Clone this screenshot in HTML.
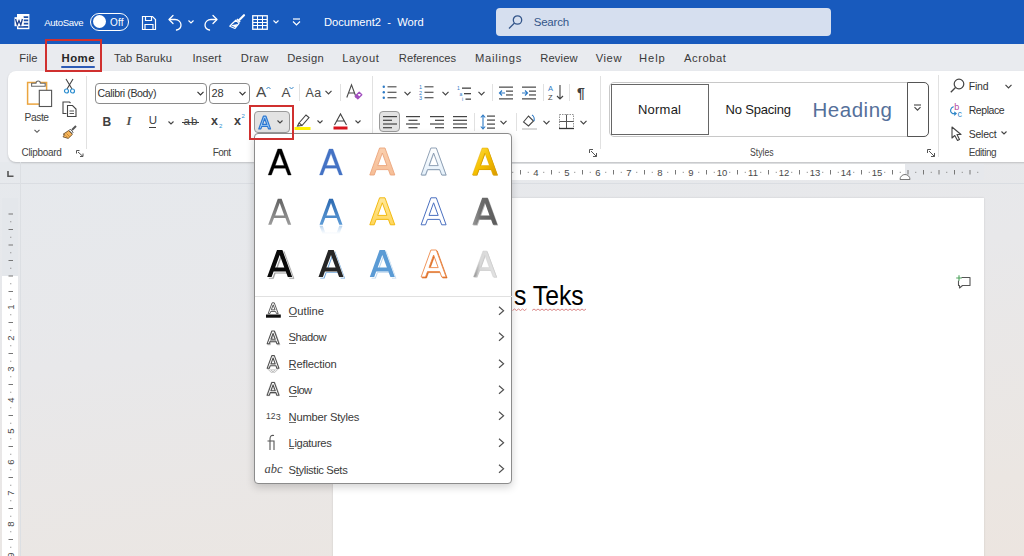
<!DOCTYPE html>
<html><head><meta charset="utf-8"><style>
html,body{margin:0;padding:0}
body{width:1024px;height:556px;overflow:hidden;position:relative;font-family:"Liberation Sans",sans-serif;background:#E8EAED}
.a{position:absolute}
.t{position:absolute;white-space:nowrap}
svg{overflow:visible}
</style></head><body>
<div class="a" style="left:0;top:162px;width:1024px;height:394px;background:linear-gradient(172deg,#E6E9ED 0%,#E8E8EA 40%,#EBE6E2 85%,#ECE5E0 100%)"></div>
<div class="a" style="left:0px;top:0px;width:1024px;height:44px;background:#185ABD"></div>
<div class="a" style="left:0px;top:44px;width:1024px;height:118px;background:#E9EBEF"></div>
<div class="a" style="left:8px;top:71px;width:1030px;height:91px;background:#FFFFFF;border-radius:8px;box-shadow:0 1px 2px rgba(0,0,0,0.18)"></div>
<svg class="a" style="left:14px;top:14px;" width="16" height="16" viewBox="0 0 16 16"><rect x="3.6" y="0.6" width="11.2" height="14" fill="#fff" stroke="#fff" stroke-width="1.2"/><path d="M9.6 3.2h4.6M9.6 6.4h4.6M9.6 9.6h4.6M4.4 12.8h9.8" stroke="#1C4FA8" stroke-width="1.7"/><rect x="0.5" y="3.2" width="9" height="9" fill="#fff"/><path d="M1.6 5 L3.2 10.8 L5 6.6 L6.8 10.8 L8.4 5" fill="none" stroke="#1D3F8C" stroke-width="1.3"/></svg>
<div class="t" style="left:44.2px;top:18.17px;font-size:9.6px;line-height:9.6px;letter-spacing:-0.319px;color:#FFFFFF;">AutoSave</div>
<div class="a" style="left:90px;top:13px;width:37px;height:16px;border:1.3px solid #fff;border-radius:10px"></div>
<div class="a" style="left:92.5px;top:15.3px;width:13px;height:13px;background:#fff;border-radius:50%"></div>
<div class="t" style="left:110.0px;top:17.83px;font-size:10px;line-height:10px;letter-spacing:0.173px;color:#FFFFFF;">Off</div>
<svg class="a" style="left:141px;top:15px;" width="16" height="16" viewBox="0 0 16 16"><path d="M1.5 1.5h10l3 3v10h-13z" fill="none" stroke="#fff" stroke-width="1.2"/><path d="M4.5 1.5v4h6v-4M4 14.5v-5h8v5" fill="none" stroke="#fff" stroke-width="1.2"/></svg>
<svg class="a" style="left:167px;top:14px;" width="16" height="17" viewBox="0 0 16 17"><path d="M2 5.5 L6 1.5 M2 5.5 L6 9.5" fill="none" stroke="#fff" stroke-width="1.3" stroke-linecap="round"/><path d="M2.5 5.5 H8 C11.5 5.5 14 8 14 11 C14 13.5 12 15.5 9.5 16" fill="none" stroke="#fff" stroke-width="1.3" stroke-linecap="round"/></svg>
<svg class="a" style="left:188px;top:20px;" width="6" height="4" viewBox="0 0 6 4"><path d="M0.5 0.5l2.5 2.5l2.5-2.5" fill="none" stroke="#fff" stroke-width="1.1"/></svg>
<svg class="a" style="left:203px;top:14px;" width="16" height="17" viewBox="0 0 16 17"><path d="M14 5.5 L10 1.5 M14 5.5 L10 9.5" fill="none" stroke="#fff" stroke-width="1.3" stroke-linecap="round"/><path d="M13.5 5.5 H8 C4.5 5.5 2 8 2 11 C2 13.5 4 15.5 6.5 16" fill="none" stroke="#fff" stroke-width="1.3" stroke-linecap="round"/></svg>
<svg class="a" style="left:229px;top:14px;" width="16" height="16" viewBox="0 0 16 16"><path d="M15 1.2 L10.5 5.7" stroke="#fff" stroke-width="2.2" stroke-linecap="round"/><path d="M8.6 4.6 L11.6 7.6 L10.4 8.8 L7.4 5.8 Z" fill="#fff"/><path d="M6.8 6.2 L10 9.4 L6 14.5 L0.8 12.2 L2.8 10 Z" fill="none" stroke="#fff" stroke-width="1.2" stroke-linejoin="round"/><path d="M2 11.2 L6.5 13.5 L9 10 Z" fill="#fff"/></svg>
<svg class="a" style="left:252px;top:15px;" width="16" height="15" viewBox="0 0 16 15"><rect x="0.75" y="0.75" width="14.5" height="13.5" fill="none" stroke="#fff" stroke-width="1.3"/><path d="M1 4.5h14M1 7.5h14M1 10.5h14M5.5 1v13M10.5 1v13" stroke="#fff" stroke-width="1"/></svg>
<svg class="a" style="left:273px;top:20px;" width="6" height="4" viewBox="0 0 6 4"><path d="M0.5 0.5l2.5 2.5l2.5-2.5" fill="none" stroke="#fff" stroke-width="1.1"/></svg>
<svg class="a" style="left:292px;top:18px;" width="9" height="8" viewBox="0 0 9 8"><path d="M1 1h7" stroke="#fff" stroke-width="1.2"/><path d="M1 3.5l3.5 3.5l3.5-3.5" fill="none" stroke="#fff" stroke-width="1.2"/></svg>
<div class="t" style="left:323.6px;top:17.16px;font-size:11.5px;line-height:11.5px;letter-spacing:0.000px;color:#FFFFFF;transform:scaleX(0.97);transform-origin:0 0;">Document2 &nbsp;-&nbsp; Word</div>
<div class="a" style="left:496px;top:8px;width:335px;height:28px;background:#D6DFEF;border-radius:4px"></div>
<svg class="a" style="left:508px;top:15px;" width="15" height="14" viewBox="0 0 15 14"><circle cx="9.5" cy="5" r="4.2" fill="none" stroke="#34568A" stroke-width="1.3"/><path d="M6.5 8 L1 13.5" stroke="#34568A" stroke-width="1.3"/></svg>
<div class="t" style="left:533.7px;top:17.16px;font-size:11.5px;line-height:11.5px;letter-spacing:-0.208px;color:#34568A;">Search</div>
<div class="t" style="left:19.3px;top:52.72px;font-size:11.2px;line-height:11.2px;letter-spacing:0.051px;color:#3A3A3A;">File</div>
<div class="t" style="left:113.9px;top:52.72px;font-size:11.2px;line-height:11.2px;letter-spacing:0.160px;color:#3A3A3A;">Tab Baruku</div>
<div class="t" style="left:192.6px;top:52.72px;font-size:11.2px;line-height:11.2px;letter-spacing:0.158px;color:#3A3A3A;">Insert</div>
<div class="t" style="left:240.7px;top:52.72px;font-size:11.2px;line-height:11.2px;letter-spacing:0.488px;color:#3A3A3A;">Draw</div>
<div class="t" style="left:287.2px;top:52.72px;font-size:11.2px;line-height:11.2px;letter-spacing:0.327px;color:#3A3A3A;">Design</div>
<div class="t" style="left:342.2px;top:52.72px;font-size:11.2px;line-height:11.2px;letter-spacing:0.614px;color:#3A3A3A;">Layout</div>
<div class="t" style="left:398.8px;top:52.72px;font-size:11.2px;line-height:11.2px;letter-spacing:0.019px;color:#3A3A3A;">References</div>
<div class="t" style="left:475.0px;top:52.72px;font-size:11.2px;line-height:11.2px;letter-spacing:0.774px;color:#3A3A3A;">Mailings</div>
<div class="t" style="left:540.2px;top:52.72px;font-size:11.2px;line-height:11.2px;letter-spacing:0.155px;color:#3A3A3A;">Review</div>
<div class="t" style="left:595.7px;top:52.72px;font-size:11.2px;line-height:11.2px;letter-spacing:0.575px;color:#3A3A3A;">View</div>
<div class="t" style="left:639.0px;top:52.72px;font-size:11.2px;line-height:11.2px;letter-spacing:0.922px;color:#3A3A3A;">Help</div>
<div class="t" style="left:684.0px;top:52.72px;font-size:11.2px;line-height:11.2px;letter-spacing:0.567px;color:#3A3A3A;">Acrobat</div>
<div class="t" style="left:61.4px;top:52.55px;font-size:11.4px;line-height:11.4px;letter-spacing:0.509px;color:#262626;font-weight:bold;">Home</div>
<div class="a" style="left:61px;top:66px;width:34px;height:2.2px;background:#2D5BB5;border-radius:1px"></div>
<svg class="a" style="left:26px;top:78px;" width="27" height="30" viewBox="0 0 27 30"><rect x="1.6" y="4.5" width="19" height="21.6" fill="#fff" stroke="#EBA53F" stroke-width="1.5"/><path d="M5.6 8.3 V5.2 H10 a2.2 2.2 0 0 1 4.4 0 H19.2 V8.3 Z" fill="#fff" stroke="#6A6A6A" stroke-width="1.1" stroke-linejoin="round"/><rect x="13.3" y="12.3" width="12.3" height="16.2" fill="#fff" stroke="#555" stroke-width="1.1"/></svg>
<div class="t" style="left:24.6px;top:112.76px;font-size:10.2px;line-height:10.2px;letter-spacing:-0.421px;color:#404040;">Paste</div>
<svg class="a" style="left:34px;top:129px;" width="6" height="5" viewBox="0 0 6 5"><path d="M0.5 0.8l2.5 2.5l2.5-2.5" fill="none" stroke="#555" stroke-width="1.1"/></svg>
<svg class="a" style="left:64px;top:78px;" width="11" height="16" viewBox="0 0 11 16"><path d="M2 1 L8 11 M9 1 L3 11" stroke="#444" stroke-width="1.1"/><circle cx="2.5" cy="13" r="2" fill="none" stroke="#2E8FD0" stroke-width="1.2"/><circle cx="8.5" cy="13" r="2" fill="none" stroke="#2E8FD0" stroke-width="1.2"/></svg>
<svg class="a" style="left:62px;top:101px;" width="15" height="16" viewBox="0 0 15 16"><path d="M4.5 12.5 h-3.5 v-11.5 h6.5 l1 1" fill="none" stroke="#444" stroke-width="1.1"/><path d="M5.5 4.5 h5 l3.5 3.5 v7.5 h-8.5 z" fill="#fff" stroke="#444" stroke-width="1.1"/><path d="M7.5 10h4.5M7.5 12.5h4.5" stroke="#444" stroke-width="0.9"/></svg>
<svg class="a" style="left:62px;top:125px;" width="15" height="14" viewBox="0 0 15 14"><path d="M14 1 L10 5" stroke="#555" stroke-width="2"/><path d="M8.2 4.2 L11.2 7.2 L10 8.4 L7 5.4 Z" fill="#fff" stroke="#555" stroke-width="0.9"/><path d="M6.6 5.6 L10.4 9.4 L6.2 13.4 L1 11.8 L2.6 9.6 L1.2 9.2 Z" fill="#F6B45A" stroke="#6B5030" stroke-width="0.9" stroke-linejoin="round"/><path d="M4.5 8.5 L7.8 11.8 M3.5 10.3 L5.6 12.4" stroke="#B87A20" stroke-width="0.7"/></svg>
<div class="t" style="left:21.6px;top:147.93px;font-size:10px;line-height:10px;letter-spacing:-0.338px;color:#444;">Clipboard</div>
<svg class="a" style="left:76px;top:150px;" width="8" height="7" viewBox="0 0 8 7"><path d="M0.5 0.5h3M0.5 0.5v3M2 2 L7 6.5M7 3.5v3h-3" fill="none" stroke="#555" stroke-width="1"/></svg>
<div class="a" style="left:86px;top:76px;width:1px;height:73px;background:#E1E1E1"></div>
<div class="a" style="left:95px;top:82.5px;width:112px;height:21px;border:1px solid #8A8A8A;border-radius:4px;box-sizing:border-box"></div>
<div class="t" style="left:97.5px;top:88.02px;font-size:10.6px;line-height:10.6px;letter-spacing:-0.401px;color:#333;">Calibri (Body)</div>
<svg class="a" style="left:197px;top:91px;" width="7" height="5" viewBox="0 0 7 5"><path d="M0.5 0.8l3 3l3-3" fill="none" stroke="#333" stroke-width="1.2"/></svg>
<div class="a" style="left:209px;top:82.5px;width:40.5px;height:21px;border:1px solid #8A8A8A;border-radius:4px;box-sizing:border-box"></div>
<div class="t" style="left:211.5px;top:88.19px;font-size:11px;line-height:11px;letter-spacing:-0.236px;color:#333;">28</div>
<svg class="a" style="left:239px;top:91px;" width="7" height="5" viewBox="0 0 7 5"><path d="M0.5 0.8l3 3l3-3" fill="none" stroke="#333" stroke-width="1.2"/></svg>
<div class="t" style="left:256.0px;top:84.38px;font-size:15.5px;line-height:15.5px;letter-spacing:0.000px;color:#4A4A4A;">A</div>
<svg class="a" style="left:265.5px;top:85.5px;" width="5" height="4" viewBox="0 0 5 4"><path d="M0.5 3l2-2l2 2" fill="none" stroke="#3A88C8" stroke-width="1"/></svg>
<div class="t" style="left:281.5px;top:86.07px;font-size:13.5px;line-height:13.5px;letter-spacing:0.000px;color:#4A4A4A;">A</div>
<svg class="a" style="left:288.5px;top:85.5px;" width="5" height="4" viewBox="0 0 5 4"><path d="M0.5 1l2 2l2-2" fill="none" stroke="#3A88C8" stroke-width="1"/></svg>
<div class="a" style="left:299px;top:84px;width:1px;height:17px;background:#E1E1E1"></div>
<div class="t" style="left:305.6px;top:86.92px;font-size:12.5px;line-height:12.5px;letter-spacing:0.210px;color:#4A4A4A;">Aa</div>
<svg class="a" style="left:325px;top:90px;" width="7" height="5" viewBox="0 0 7 5"><path d="M0.5 0.8l3 3l3-3" fill="none" stroke="#444" stroke-width="1.2"/></svg>
<div class="a" style="left:340px;top:84px;width:1px;height:17px;background:#E1E1E1"></div>
<svg class="a" style="left:346px;top:84px;" width="17" height="16" viewBox="0 0 17 16"><path d="M0.8 13.5 L5.5 0.8 L10.2 13.5 M2.5 9h6" fill="none" stroke="#4A4A4A" stroke-width="1.1"/><path d="M9.2 12.2 L13.2 8.2 L15.8 10.8 L11.8 14.8 Z" fill="#fff" stroke="#A24FBF" stroke-width="1.3" stroke-linejoin="round"/><path d="M9.2 12.2 L11.2 10.2 L13.8 12.8 L11.8 14.8 Z" fill="#A24FBF"/></svg>
<div class="a" style="left:372px;top:76px;width:1px;height:73px;background:#E1E1E1"></div>
<div class="t" style="left:102.4px;top:115.94px;font-size:12px;line-height:12px;letter-spacing:0.000px;color:#404040;font-weight:bold;">B</div>
<div class="t" style="left:126.5px;top:115.22px;font-size:12.5px;line-height:12.5px;letter-spacing:0.000px;color:#505050;font-family:'Liberation Serif',serif;font-weight:bold;"><i>I</i></div>
<div class="t" style="left:148.7px;top:115.26px;font-size:11.5px;line-height:11.5px;letter-spacing:0.000px;color:#404040;">U</div>
<div class="a" style="left:148.7px;top:127px;width:7.6px;height:1px;background:#404040"></div>
<svg class="a" style="left:168px;top:121px;" width="6" height="4" viewBox="0 0 6 4"><path d="M0.5 0.5l2.5 2.5l2.5-2.5" fill="none" stroke="#444" stroke-width="1.1"/></svg>
<div class="t" style="left:183.5px;top:115.86px;font-size:11.5px;line-height:11.5px;letter-spacing:1.208px;color:#404040;">ab</div>
<div class="a" style="left:182px;top:121.5px;width:17px;height:1px;background:#404040"></div>
<div class="t" style="left:211.0px;top:115.02px;font-size:12.5px;line-height:12.5px;letter-spacing:0.000px;color:#404040;font-weight:bold;">x</div>
<div class="t" style="left:219.0px;top:123.42px;font-size:6px;line-height:6px;letter-spacing:0.000px;color:#2E8FD0;">2</div>
<div class="t" style="left:234.0px;top:115.02px;font-size:12.5px;line-height:12.5px;letter-spacing:0.000px;color:#404040;font-weight:bold;">x</div>
<div class="t" style="left:241.5px;top:112.92px;font-size:6px;line-height:6px;letter-spacing:0.000px;color:#2E8FD0;">2</div>
<div class="a" style="left:253.7px;top:111.2px;width:36px;height:21.5px;background:#E3E3E3;border:1px solid #9A9A9A;border-radius:4px;box-sizing:border-box"></div>
<svg class="a" style="left:257px;top:114px;" width="16" height="16" viewBox="0 0 16 16"><path d="M0 27 L9.8 0 L15.2 0 L25 27 L20.6 27 L18.6 21.6 L6.4 21.6 L4.4 27 Z M7.9 17.6 L17.1 17.6 L12.5 5.0 Z" fill-rule="evenodd" transform="translate(1.8 2.2) scale(0.47)" fill="#A6D2F7" stroke="#2D78D2" stroke-width="2.6" stroke-linejoin="round"/></svg>
<svg class="a" style="left:277px;top:120px;" width="6" height="4" viewBox="0 0 6 4"><path d="M0.5 0.5l2.5 2.5l2.5-2.5" fill="none" stroke="#444" stroke-width="1.1"/></svg>
<svg class="a" style="left:294px;top:113px;" width="17" height="17" viewBox="0 0 17 17"><path d="M5 10 L12 2 L15 4.5 L8 12.5 Z" fill="#fff" stroke="#444" stroke-width="1.1"/><path d="M5 10 L3.5 13 L8 12.5" fill="none" stroke="#444" stroke-width="1.1"/><rect x="0.5" y="14" width="16" height="3" fill="#FFF200"/></svg>
<svg class="a" style="left:317px;top:120px;" width="6" height="4" viewBox="0 0 6 4"><path d="M0.5 0.5l2.5 2.5l2.5-2.5" fill="none" stroke="#444" stroke-width="1.1"/></svg>
<svg class="a" style="left:333px;top:113px;" width="15" height="17" viewBox="0 0 15 17"><path d="M1.5 12 L7.5 1 L13.5 12 M3.8 8h7.4" fill="none" stroke="#444" stroke-width="1.1"/><rect x="0.5" y="13.5" width="14" height="3" fill="#D9141E"/></svg>
<svg class="a" style="left:355px;top:120px;" width="6" height="4" viewBox="0 0 6 4"><path d="M0.5 0.5l2.5 2.5l2.5-2.5" fill="none" stroke="#444" stroke-width="1.1"/></svg>
<div class="t" style="left:212.8px;top:147.93px;font-size:10px;line-height:10px;letter-spacing:-0.603px;color:#444;">Font</div>
<svg class="a" style="left:381.5px;top:85px;" width="15" height="15" viewBox="0 0 15 15"><circle cx="1.8" cy="1.8" r="1.2" fill="#2E7BC6"/><rect x="5.5" y="1.2000000000000002" width="9" height="1.2" fill="#555"/><circle cx="1.8" cy="7.3" r="1.2" fill="#2E7BC6"/><rect x="5.5" y="6.7" width="9" height="1.2" fill="#555"/><circle cx="1.8" cy="12.7" r="1.2" fill="#2E7BC6"/><rect x="5.5" y="12.1" width="9" height="1.2" fill="#555"/></svg>
<svg class="a" style="left:419px;top:85px;" width="15" height="15" viewBox="0 0 15 15"><text x="0" y="4.0" font-size="5.5" font-family="Liberation Sans" fill="#2E7BC6">1</text><rect x="5.5" y="1.2000000000000002" width="9" height="1.2" fill="#555"/><text x="0" y="9.5" font-size="5.5" font-family="Liberation Sans" fill="#2E7BC6">2</text><rect x="5.5" y="6.7" width="9" height="1.2" fill="#555"/><text x="0" y="14.899999999999999" font-size="5.5" font-family="Liberation Sans" fill="#2E7BC6">3</text><rect x="5.5" y="12.1" width="9" height="1.2" fill="#555"/></svg>
<svg class="a" style="left:404px;top:91px;" width="7" height="5" viewBox="0 0 7 5"><path d="M0.5 0.8l3 3l3-3" fill="none" stroke="#444" stroke-width="1.2"/></svg>
<svg class="a" style="left:442px;top:91px;" width="7" height="5" viewBox="0 0 7 5"><path d="M0.5 0.8l3 3l3-3" fill="none" stroke="#444" stroke-width="1.2"/></svg>
<svg class="a" style="left:456.5px;top:85.5px;" width="15" height="15" viewBox="0 0 15 15"><text x="0" y="4" font-size="5" font-family="Liberation Sans" fill="#2E7BC6">1</text><text x="2.5" y="9.5" font-size="5" font-family="Liberation Sans" fill="#2E7BC6">a</text><text x="5" y="15" font-size="5" font-family="Liberation Sans" fill="#2E7BC6">i</text><rect x="5" y="1.5" width="9" height="1.3" fill="#444"/><rect x="7" y="7" width="7" height="1.3" fill="#444"/><rect x="8.5" y="12.5" width="5.5" height="1.3" fill="#444"/></svg>
<svg class="a" style="left:478px;top:91px;" width="7" height="5" viewBox="0 0 7 5"><path d="M0.5 0.8l3 3l3-3" fill="none" stroke="#444" stroke-width="1.2"/></svg>
<div class="a" style="left:492px;top:84px;width:1px;height:17px;background:#E1E1E1"></div>
<svg class="a" style="left:499px;top:85.5px;" width="14" height="14" viewBox="0 0 14 14"><rect x="0" y="0.5" width="14" height="1.3" fill="#555"/><rect x="0" y="12.2" width="14" height="1.3" fill="#555"/><rect x="7" y="4.5" width="7" height="1.3" fill="#555"/><rect x="7" y="8.3" width="7" height="1.3" fill="#555"/><path d="M6 7h-5.5M3 4.5 L0.5 7 L3 9.5" fill="none" stroke="#2E7BC6" stroke-width="1.2"/></svg>
<svg class="a" style="left:522px;top:85.5px;" width="14" height="14" viewBox="0 0 14 14"><rect x="0" y="0.5" width="14" height="1.3" fill="#555"/><rect x="0" y="12.2" width="14" height="1.3" fill="#555"/><rect x="7" y="4.5" width="7" height="1.3" fill="#555"/><rect x="7" y="8.3" width="7" height="1.3" fill="#555"/><path d="M0 7h5.5M3 4.5 L5.5 7 L3 9.5" fill="none" stroke="#2E7BC6" stroke-width="1.2"/></svg>
<div class="a" style="left:543px;top:84px;width:1px;height:17px;background:#E1E1E1"></div>
<svg class="a" style="left:548px;top:84px;" width="16" height="16" viewBox="0 0 16 16"><text x="0" y="7" font-size="7.5" font-family="Liberation Sans" fill="#2E7BC6">A</text><text x="0" y="15.5" font-size="7.5" font-family="Liberation Sans" fill="#444">Z</text><path d="M12 1v14M9 12l3 3l3-3" fill="none" stroke="#444" stroke-width="1.1"/></svg>
<div class="a" style="left:569px;top:84px;width:1px;height:17px;background:#E1E1E1"></div>
<div class="t" style="left:577.0px;top:85.65px;font-size:14px;line-height:14px;letter-spacing:0.000px;color:#404040;font-weight:bold;">&#182;</div>
<div class="a" style="left:379.4px;top:111.3px;width:21px;height:21px;background:#E3E3E3;border:1px solid #9A9A9A;border-radius:4px;box-sizing:border-box"></div>
<svg class="a" style="left:383px;top:115px;" width="14" height="14" viewBox="0 0 14 14"><rect x="0" y="1.0" width="14" height="1.2" fill="#444"/><rect x="0" y="4.7" width="9" height="1.2" fill="#444"/><rect x="0" y="8.4" width="14" height="1.2" fill="#444"/><rect x="0" y="12.100000000000001" width="9" height="1.2" fill="#444"/></svg>
<svg class="a" style="left:406px;top:115px;" width="14" height="14" viewBox="0 0 14 14"><rect x="0" y="1.0" width="14" height="1.2" fill="#444"/><rect x="2.5" y="4.7" width="9" height="1.2" fill="#444"/><rect x="0" y="8.4" width="14" height="1.2" fill="#444"/><rect x="2.5" y="12.100000000000001" width="9" height="1.2" fill="#444"/></svg>
<svg class="a" style="left:430px;top:115px;" width="14" height="14" viewBox="0 0 14 14"><rect x="0" y="1.0" width="14" height="1.2" fill="#444"/><rect x="5" y="4.7" width="9" height="1.2" fill="#444"/><rect x="0" y="8.4" width="14" height="1.2" fill="#444"/><rect x="5" y="12.100000000000001" width="9" height="1.2" fill="#444"/></svg>
<svg class="a" style="left:453px;top:115px;" width="14" height="14" viewBox="0 0 14 14"><rect x="0" y="1.0" width="14" height="1.2" fill="#444"/><rect x="0" y="4.7" width="14" height="1.2" fill="#444"/><rect x="0" y="8.4" width="14" height="1.2" fill="#444"/><rect x="0" y="12.100000000000001" width="14" height="1.2" fill="#444"/></svg>
<div class="a" style="left:474px;top:113px;width:1px;height:18px;background:#E1E1E1"></div>
<svg class="a" style="left:480px;top:114px;" width="15" height="16" viewBox="0 0 15 16"><path d="M3 1v14M0.8 3.5 L3 1 L5.2 3.5 M0.8 12.5 L3 15 L5.2 12.5" fill="none" stroke="#2E7BC6" stroke-width="1.1"/><rect x="7" y="1.5" width="8" height="1.2" fill="#444"/><rect x="7" y="5.5" width="8" height="1.2" fill="#444"/><rect x="7" y="9.5" width="8" height="1.2" fill="#444"/><rect x="7" y="13.5" width="8" height="1.2" fill="#444"/></svg>
<svg class="a" style="left:500px;top:120px;" width="7" height="5" viewBox="0 0 7 5"><path d="M0.5 0.8l3 3l3-3" fill="none" stroke="#444" stroke-width="1.2"/></svg>
<div class="a" style="left:516px;top:113px;width:1px;height:18px;background:#E1E1E1"></div>
<svg class="a" style="left:522px;top:113px;" width="15" height="17" viewBox="0 0 15 17"><path d="M1.5 9 L6.5 3 L11.5 8 L6.5 13 Z" fill="#fff" stroke="#444" stroke-width="1.1"/><path d="M10 2 C12 3 12.5 6 12 8" fill="none" stroke="#2E7BC6" stroke-width="1.2"/><rect x="0" y="15" width="15" height="2" fill="#D8D8D8"/></svg>
<svg class="a" style="left:543px;top:120px;" width="7" height="5" viewBox="0 0 7 5"><path d="M0.5 0.8l3 3l3-3" fill="none" stroke="#444" stroke-width="1.2"/></svg>
<svg class="a" style="left:559px;top:114px;" width="15" height="15" viewBox="0 0 15 15"><rect x="0.5" y="0.5" width="14" height="14" fill="none" stroke="#888" stroke-width="0.9" stroke-dasharray="1.5 1"/><path d="M7.5 0.5v14M0.5 7.5h14" stroke="#555" stroke-width="1"/><path d="M0 14.5h15" stroke="#333" stroke-width="1.3"/></svg>
<svg class="a" style="left:580px;top:120px;" width="7" height="5" viewBox="0 0 7 5"><path d="M0.5 0.8l3 3l3-3" fill="none" stroke="#444" stroke-width="1.2"/></svg>
<svg class="a" style="left:589px;top:149px;" width="8" height="8" viewBox="0 0 8 8"><path d="M0.5 0.5h3.5M0.5 0.5v3.5M2 2 L7.5 7.5M7.5 4v3.5h-3.5" fill="none" stroke="#555" stroke-width="1"/></svg>
<div class="a" style="left:600px;top:76px;width:1px;height:73px;background:#E1E1E1"></div>
<div class="a" style="left:609.3px;top:81.6px;width:320px;height:55px;border:1px solid #C8C8C8;border-radius:5px;box-sizing:border-box"></div>
<div class="a" style="left:611px;top:84px;width:97.8px;height:51px;border:1.5px solid #666;box-sizing:border-box;background:#fff"></div>
<div class="t" style="left:638.0px;top:103.09px;font-size:13px;line-height:13px;letter-spacing:0.221px;color:#1A1A1A;">Normal</div>
<div class="t" style="left:725.5px;top:103.09px;font-size:13px;line-height:13px;letter-spacing:-0.190px;color:#1A1A1A;">No Spacing</div>
<div class="t" style="left:812.5px;top:99.64px;font-size:20.5px;line-height:20.5px;letter-spacing:0.522px;color:#55709A;">Heading</div>
<div class="a" style="left:907px;top:81.6px;width:22px;height:55px;border:1px solid #555;border-radius:0 5px 5px 0;box-sizing:border-box;background:#fff"></div>
<svg class="a" style="left:913px;top:104px;" width="9" height="7" viewBox="0 0 9 7"><path d="M1 1h7" stroke="#444" stroke-width="1.1"/><path d="M1.5 3.2l3 3l3-3" fill="none" stroke="#444" stroke-width="1.1"/></svg>
<div class="t" style="left:750.3px;top:147.93px;font-size:10px;line-height:10px;letter-spacing:0.000px;color:#444;transform:scaleX(0.8703);transform-origin:0 0;">Styles</div>
<svg class="a" style="left:927px;top:149px;" width="8" height="8" viewBox="0 0 8 8"><path d="M0.5 0.5h3.5M0.5 0.5v3.5M2 2 L7.5 7.5M7.5 4v3.5h-3.5" fill="none" stroke="#555" stroke-width="1"/></svg>
<div class="a" style="left:938px;top:75px;width:1px;height:82px;background:#E1E1E1"></div>
<svg class="a" style="left:950px;top:78px;" width="15" height="15" viewBox="0 0 15 15"><circle cx="9" cy="6" r="4.8" fill="none" stroke="#444" stroke-width="1.2"/><path d="M5.5 9.5 L0.8 14.2" stroke="#444" stroke-width="1.3"/></svg>
<div class="t" style="left:968.7px;top:81.01px;font-size:10.5px;line-height:10.5px;letter-spacing:-0.209px;color:#333;">Find</div>
<svg class="a" style="left:1005px;top:84px;" width="7" height="5" viewBox="0 0 7 5"><path d="M0.5 0.8l3 3l3-3" fill="none" stroke="#444" stroke-width="1.2"/></svg>
<svg class="a" style="left:949px;top:102px;" width="15" height="15" viewBox="0 0 15 15"><text x="5.2" y="8.2" font-size="9" font-family="Liberation Sans" fill="#B4489B">b</text><text x="8.6" y="14.6" font-size="9" font-family="Liberation Sans" fill="#2E86C8">c</text><path d="M4.6 4.6 C1.2 5.6 0.4 10.2 3.6 11.6 H7.2 M5.2 9.8 L7.2 11.6 L5.2 13.4" fill="none" stroke="#2E86C8" stroke-width="1.1"/></svg>
<div class="t" style="left:968.7px;top:104.51px;font-size:10.5px;line-height:10.5px;letter-spacing:-0.421px;color:#333;">Replace</div>
<svg class="a" style="left:951px;top:126px;" width="11" height="15" viewBox="0 0 11 15"><path d="M1 1 L1 12 L3.8 9.5 L6.5 14.5 L8.5 13.5 L6 8.5 L10 8.5 Z" fill="#fff" stroke="#444" stroke-width="1.1" stroke-linejoin="round"/></svg>
<div class="t" style="left:968.7px;top:128.71px;font-size:10.5px;line-height:10.5px;letter-spacing:-0.237px;color:#333;">Select</div>
<svg class="a" style="left:1000.5px;top:131px;" width="6" height="4" viewBox="0 0 6 4"><path d="M0.5 0.5l2.5 2.5l2.5-2.5" fill="none" stroke="#444" stroke-width="1.1"/></svg>
<div class="t" style="left:968.7px;top:147.93px;font-size:10px;line-height:10px;letter-spacing:-0.430px;color:#444;">Editing</div>
<div class="a" style="left:45px;top:38.5px;width:57px;height:33px;border:2px solid #D0302F;box-sizing:border-box"></div>
<div class="a" style="left:333px;top:163.5px;width:572px;height:16.5px;background:#FFFFFF"></div>
<div class="a" style="left:905px;top:163.5px;width:79px;height:16.5px;background:#E6E8EC"></div>
<div class="a" style="left:0px;top:182.5px;width:1024px;height:1px;background:#DADDE2"></div>
<svg class="a" style="left:512px;top:160px;" width="512" height="25" viewBox="512 160 512 25"><text x="505.0" y="175.6" font-size="9.5" text-anchor="middle" font-family="Liberation Sans" fill="#4A4A4A">3</text><rect x="512.25" y="171.8" width="1" height="1.1" fill="#888"/><rect x="520.0" y="170" width="1" height="4.5" fill="#777"/><rect x="527.75" y="171.8" width="1" height="1.1" fill="#888"/><text x="536.0" y="175.6" font-size="9.5" text-anchor="middle" font-family="Liberation Sans" fill="#4A4A4A">4</text><rect x="543.25" y="171.8" width="1" height="1.1" fill="#888"/><rect x="551.0" y="170" width="1" height="4.5" fill="#777"/><rect x="558.75" y="171.8" width="1" height="1.1" fill="#888"/><text x="567.0" y="175.6" font-size="9.5" text-anchor="middle" font-family="Liberation Sans" fill="#4A4A4A">5</text><rect x="574.25" y="171.8" width="1" height="1.1" fill="#888"/><rect x="582.0" y="170" width="1" height="4.5" fill="#777"/><rect x="589.75" y="171.8" width="1" height="1.1" fill="#888"/><text x="598.0" y="175.6" font-size="9.5" text-anchor="middle" font-family="Liberation Sans" fill="#4A4A4A">6</text><rect x="605.25" y="171.8" width="1" height="1.1" fill="#888"/><rect x="613.0" y="170" width="1" height="4.5" fill="#777"/><rect x="620.75" y="171.8" width="1" height="1.1" fill="#888"/><text x="629.0" y="175.6" font-size="9.5" text-anchor="middle" font-family="Liberation Sans" fill="#4A4A4A">7</text><rect x="636.25" y="171.8" width="1" height="1.1" fill="#888"/><rect x="644.0" y="170" width="1" height="4.5" fill="#777"/><rect x="651.75" y="171.8" width="1" height="1.1" fill="#888"/><text x="660.0" y="175.6" font-size="9.5" text-anchor="middle" font-family="Liberation Sans" fill="#4A4A4A">8</text><rect x="667.25" y="171.8" width="1" height="1.1" fill="#888"/><rect x="675.0" y="170" width="1" height="4.5" fill="#777"/><rect x="682.75" y="171.8" width="1" height="1.1" fill="#888"/><text x="691.0" y="175.6" font-size="9.5" text-anchor="middle" font-family="Liberation Sans" fill="#4A4A4A">9</text><rect x="698.25" y="171.8" width="1" height="1.1" fill="#888"/><rect x="706.0" y="170" width="1" height="4.5" fill="#777"/><rect x="713.75" y="171.8" width="1" height="1.1" fill="#888"/><text x="722.0" y="175.6" font-size="9.5" text-anchor="middle" font-family="Liberation Sans" fill="#4A4A4A">10</text><rect x="729.25" y="171.8" width="1" height="1.1" fill="#888"/><rect x="737.0" y="170" width="1" height="4.5" fill="#777"/><rect x="744.75" y="171.8" width="1" height="1.1" fill="#888"/><text x="753.0" y="175.6" font-size="9.5" text-anchor="middle" font-family="Liberation Sans" fill="#4A4A4A">11</text><rect x="760.25" y="171.8" width="1" height="1.1" fill="#888"/><rect x="768.0" y="170" width="1" height="4.5" fill="#777"/><rect x="775.75" y="171.8" width="1" height="1.1" fill="#888"/><text x="784.0" y="175.6" font-size="9.5" text-anchor="middle" font-family="Liberation Sans" fill="#4A4A4A">12</text><rect x="791.25" y="171.8" width="1" height="1.1" fill="#888"/><rect x="799.0" y="170" width="1" height="4.5" fill="#777"/><rect x="806.75" y="171.8" width="1" height="1.1" fill="#888"/><text x="815.0" y="175.6" font-size="9.5" text-anchor="middle" font-family="Liberation Sans" fill="#4A4A4A">13</text><rect x="822.25" y="171.8" width="1" height="1.1" fill="#888"/><rect x="830.0" y="170" width="1" height="4.5" fill="#777"/><rect x="837.75" y="171.8" width="1" height="1.1" fill="#888"/><text x="846.0" y="175.6" font-size="9.5" text-anchor="middle" font-family="Liberation Sans" fill="#4A4A4A">14</text><rect x="853.25" y="171.8" width="1" height="1.1" fill="#888"/><rect x="861.0" y="170" width="1" height="4.5" fill="#777"/><rect x="868.75" y="171.8" width="1" height="1.1" fill="#888"/><text x="877.0" y="175.6" font-size="9.5" text-anchor="middle" font-family="Liberation Sans" fill="#4A4A4A">15</text><rect x="884.25" y="171.8" width="1" height="1.1" fill="#888"/><rect x="892.0" y="170" width="1" height="4.5" fill="#777"/><rect x="899.75" y="171.8" width="1" height="1.1" fill="#888"/><rect x="907.5" y="170" width="1" height="4.5" fill="#777"/><rect x="915.25" y="171.8" width="1" height="1.1" fill="#888"/><rect x="923.0" y="170" width="1" height="4.5" fill="#777"/><rect x="930.75" y="171.8" width="1" height="1.1" fill="#888"/><rect x="938.5" y="170" width="1" height="4.5" fill="#777"/><rect x="946.25" y="171.8" width="1" height="1.1" fill="#888"/><rect x="954.0" y="170" width="1" height="4.5" fill="#777"/><rect x="961.75" y="171.8" width="1" height="1.1" fill="#888"/><rect x="969.5" y="170" width="1" height="4.5" fill="#777"/><rect x="977.25" y="171.8" width="1" height="1.1" fill="#888"/></svg>
<svg class="a" style="left:899px;top:172px;" width="12" height="8" viewBox="0 0 12 8"><path d="M1 7.5 A5 5 0 0 1 11 7.5 Z" fill="#fff" stroke="#777" stroke-width="1"/></svg>
<svg class="a" style="left:7px;top:171px;" width="8" height="8" viewBox="0 0 8 8"><path d="M1 0v5.2h5.5" fill="none" stroke="#555" stroke-width="1.6"/></svg>
<div class="a" style="left:2px;top:276px;width:16px;height:290px;background:#FFFFFF"></div>
<div class="a" style="left:2px;top:198px;width:16px;height:78px;background:#E4E7EB"></div>
<div class="a" style="left:20px;top:162px;width:1px;height:394px;background:#DCDFE3"></div>
<svg class="a" style="left:0px;top:200px;" width="20" height="356" viewBox="0 200 20 356"><rect x="8.5" y="213.5" width="4.5" height="1" fill="#777"/><rect x="10.2" y="221.25" width="1.1" height="1" fill="#888"/><rect x="8.5" y="229.0" width="4.5" height="1" fill="#777"/><rect x="10.2" y="236.75" width="1.1" height="1" fill="#888"/><rect x="8.5" y="244.5" width="4.5" height="1" fill="#777"/><rect x="10.2" y="252.25" width="1.1" height="1" fill="#888"/><rect x="8.5" y="260.0" width="4.5" height="1" fill="#777"/><rect x="10.2" y="267.75" width="1.1" height="1" fill="#888"/><rect x="8.5" y="275.5" width="4.5" height="1" fill="#777"/><rect x="10.2" y="283.25" width="1.1" height="1" fill="#888"/><rect x="8.5" y="291.0" width="4.5" height="1" fill="#777"/><rect x="10.2" y="298.75" width="1.1" height="1" fill="#888"/><text transform="translate(14.3 307.0) rotate(-90)" x="0" y="0" font-size="9.5" text-anchor="middle" font-family="Liberation Sans" fill="#4A4A4A">1</text><rect x="10.2" y="314.25" width="1.1" height="1" fill="#888"/><rect x="8.5" y="322.0" width="4.5" height="1" fill="#777"/><rect x="10.2" y="329.75" width="1.1" height="1" fill="#888"/><text transform="translate(14.3 338.0) rotate(-90)" x="0" y="0" font-size="9.5" text-anchor="middle" font-family="Liberation Sans" fill="#4A4A4A">2</text><rect x="10.2" y="345.25" width="1.1" height="1" fill="#888"/><rect x="8.5" y="353.0" width="4.5" height="1" fill="#777"/><rect x="10.2" y="360.75" width="1.1" height="1" fill="#888"/><text transform="translate(14.3 369.0) rotate(-90)" x="0" y="0" font-size="9.5" text-anchor="middle" font-family="Liberation Sans" fill="#4A4A4A">3</text><rect x="10.2" y="376.25" width="1.1" height="1" fill="#888"/><rect x="8.5" y="384.0" width="4.5" height="1" fill="#777"/><rect x="10.2" y="391.75" width="1.1" height="1" fill="#888"/><text transform="translate(14.3 400.0) rotate(-90)" x="0" y="0" font-size="9.5" text-anchor="middle" font-family="Liberation Sans" fill="#4A4A4A">4</text><rect x="10.2" y="407.25" width="1.1" height="1" fill="#888"/><rect x="8.5" y="415.0" width="4.5" height="1" fill="#777"/><rect x="10.2" y="422.75" width="1.1" height="1" fill="#888"/><text transform="translate(14.3 431.0) rotate(-90)" x="0" y="0" font-size="9.5" text-anchor="middle" font-family="Liberation Sans" fill="#4A4A4A">5</text><rect x="10.2" y="438.25" width="1.1" height="1" fill="#888"/><rect x="8.5" y="446.0" width="4.5" height="1" fill="#777"/><rect x="10.2" y="453.75" width="1.1" height="1" fill="#888"/><text transform="translate(14.3 462.0) rotate(-90)" x="0" y="0" font-size="9.5" text-anchor="middle" font-family="Liberation Sans" fill="#4A4A4A">6</text><rect x="10.2" y="469.25" width="1.1" height="1" fill="#888"/><rect x="8.5" y="477.0" width="4.5" height="1" fill="#777"/><rect x="10.2" y="484.75" width="1.1" height="1" fill="#888"/><text transform="translate(14.3 493.0) rotate(-90)" x="0" y="0" font-size="9.5" text-anchor="middle" font-family="Liberation Sans" fill="#4A4A4A">7</text><rect x="10.2" y="500.25" width="1.1" height="1" fill="#888"/><rect x="8.5" y="508.0" width="4.5" height="1" fill="#777"/><rect x="10.2" y="515.75" width="1.1" height="1" fill="#888"/><text transform="translate(14.3 524.0) rotate(-90)" x="0" y="0" font-size="9.5" text-anchor="middle" font-family="Liberation Sans" fill="#4A4A4A">8</text><rect x="10.2" y="531.25" width="1.1" height="1" fill="#888"/><rect x="8.5" y="539.0" width="4.5" height="1" fill="#777"/><rect x="10.2" y="546.75" width="1.1" height="1" fill="#888"/><text transform="translate(14.3 555.0) rotate(-90)" x="0" y="0" font-size="9.5" text-anchor="middle" font-family="Liberation Sans" fill="#4A4A4A">9</text></svg>
<div class="a" style="left:333px;top:197.5px;width:651px;height:400px;background:#FFFFFF;box-shadow:0 0 2px rgba(0,0,0,0.12)"></div>
<div class="t" style="left:514.4px;top:281.89px;font-size:28px;line-height:28px;letter-spacing:0.000px;color:#000;transform:scaleX(0.8827);transform-origin:0 0;font-family:"Liberation Sans",sans-serif;">s Teks</div>
<svg class="a" style="left:955px;top:274px;" width="16" height="15" viewBox="0 0 16 15"><path d="M3.5 3.5 h11.5 v8 h-7.5 l-3 2.5 v-2.5 h-1 z" fill="none" stroke="#555" stroke-width="1.1" stroke-linejoin="round"/><rect x="1.5" y="1.5" width="5" height="5" fill="#fff"/><path d="M4 1.2v5.6M1.2 4h5.6" stroke="#4CA35C" stroke-width="1.1"/></svg>
<svg class="a" style="left:512px;top:306px;" width="80" height="6" viewBox="0 0 80 6"><path d="M0.5 4.5 L2.5 3.0 L4.5 4.5 L6.5 3.0 L8.5 4.5 L10.5 3.0 L12.5 4.5 L14.5 3.0" fill="none" stroke="#D26A6A" stroke-width="0.8"/><path d="M20 4.5 L22 3.0 L24 4.5 L26 3.0 L28 4.5 L30 3.0 L32 4.5 L34 3.0 L36 4.5 L38 3.0 L40 4.5 L42 3.0 L44 4.5 L46 3.0 L48 4.5 L50 3.0 L52 4.5 L54 3.0 L56 4.5 L58 3.0 L60 4.5 L62 3.0 L64 4.5 L66 3.0 L68 4.5 L70 3.0 L72 4.5 L74 3.0" fill="none" stroke="#D26A6A" stroke-width="0.8"/></svg>
<div class="a" style="left:253.5px;top:133px;width:258.5px;height:351px;background:#fff;border:1px solid #8C8C8C;border-radius:4px;box-sizing:border-box;box-shadow:0 3px 8px rgba(0,0,0,0.18)"></div>
<div class="a" style="left:254.5px;top:295.8px;width:257px;height:1.2px;background:#E1E1E1"></div>
<div class="t" style="left:288.6px;top:305.92px;font-size:11.2px;line-height:11.2px;letter-spacing:0.002px;color:#3A3A3A;">Outline</div>
<svg class="a" style="left:497.5px;top:305.59999999999997px;" width="7" height="10" viewBox="0 0 7 10"><path d="M1 0.8 L5.6 4.8 L1 8.8" fill="none" stroke="#505050" stroke-width="1.15"/></svg>
<div class="t" style="left:288.6px;top:332.37px;font-size:11.2px;line-height:11.2px;letter-spacing:-0.495px;color:#3A3A3A;">Shadow</div>
<svg class="a" style="left:497.5px;top:332.04999999999995px;" width="7" height="10" viewBox="0 0 7 10"><path d="M1 0.8 L5.6 4.8 L1 8.8" fill="none" stroke="#505050" stroke-width="1.15"/></svg>
<div class="t" style="left:288.6px;top:358.82px;font-size:11.2px;line-height:11.2px;letter-spacing:-0.178px;color:#3A3A3A;">Reflection</div>
<svg class="a" style="left:497.5px;top:358.49999999999994px;" width="7" height="10" viewBox="0 0 7 10"><path d="M1 0.8 L5.6 4.8 L1 8.8" fill="none" stroke="#505050" stroke-width="1.15"/></svg>
<div class="t" style="left:288.6px;top:385.27px;font-size:11.2px;line-height:11.2px;letter-spacing:-0.639px;color:#3A3A3A;">Glow</div>
<svg class="a" style="left:497.5px;top:384.95px;" width="7" height="10" viewBox="0 0 7 10"><path d="M1 0.8 L5.6 4.8 L1 8.8" fill="none" stroke="#505050" stroke-width="1.15"/></svg>
<div class="t" style="left:288.6px;top:411.72px;font-size:11.2px;line-height:11.2px;letter-spacing:-0.221px;color:#3A3A3A;">Number Styles</div>
<svg class="a" style="left:497.5px;top:411.4px;" width="7" height="10" viewBox="0 0 7 10"><path d="M1 0.8 L5.6 4.8 L1 8.8" fill="none" stroke="#505050" stroke-width="1.15"/></svg>
<div class="t" style="left:288.6px;top:438.17px;font-size:11.2px;line-height:11.2px;letter-spacing:-0.347px;color:#3A3A3A;">Ligatures</div>
<svg class="a" style="left:497.5px;top:437.84999999999997px;" width="7" height="10" viewBox="0 0 7 10"><path d="M1 0.8 L5.6 4.8 L1 8.8" fill="none" stroke="#505050" stroke-width="1.15"/></svg>
<div class="t" style="left:288.6px;top:464.62px;font-size:11.2px;line-height:11.2px;letter-spacing:-0.329px;color:#3A3A3A;">Stylistic Sets</div>
<svg class="a" style="left:497.5px;top:464.29999999999995px;" width="7" height="10" viewBox="0 0 7 10"><path d="M1 0.8 L5.6 4.8 L1 8.8" fill="none" stroke="#505050" stroke-width="1.15"/></svg>
<svg class="a" style="left:254px;top:134px;" width="258" height="162" viewBox="254 134 258 162"><defs>
<path id="aR" d="M0 26 L9.6 0 L13.4 0 L23 26 L19.8 26 L17.2 19.2 L5.8 19.2 L3.2 26 Z M7.0 16.6 L16.0 16.6 L11.5 4.2 Z" fill-rule="evenodd"/>
<path id="aB" d="M0 27 L9.8 0 L15.2 0 L25 27 L20.6 27 L18.6 21.6 L6.4 21.6 L4.4 27 Z M7.9 17.6 L17.1 17.6 L12.5 5.0 Z" fill-rule="evenodd"/>
<linearGradient id="gGold" x1="0" y1="0" x2="1" y2="1"><stop offset="0" stop-color="#FFE04A"/><stop offset="0.5" stop-color="#F5C000"/><stop offset="1" stop-color="#D99A00"/></linearGradient>
<linearGradient id="gGray" x1="0" y1="0" x2="0" y2="1"><stop offset="0" stop-color="#626262"/><stop offset="1" stop-color="#9C9C9C"/></linearGradient>
<linearGradient id="gBlue" x1="0" y1="0" x2="0" y2="1"><stop offset="0" stop-color="#2C69B0"/><stop offset="1" stop-color="#5E9BD6"/></linearGradient>
<linearGradient id="gBlueR" x1="0" y1="0" x2="0" y2="1"><stop offset="0.68" stop-color="#9CC3EA" stop-opacity="0"/><stop offset="1" stop-color="#7FB0E0" stop-opacity="0.55"/></linearGradient>
<linearGradient id="gDk" x1="0" y1="0" x2="1" y2="0"><stop offset="0" stop-color="#9A9A9A"/><stop offset="0.35" stop-color="#6C6C6C"/><stop offset="1" stop-color="#5A5A5A"/></linearGradient>
<linearGradient id="gLt" x1="0" y1="0" x2="1" y2="0"><stop offset="0" stop-color="#8A8A8A"/><stop offset="0.3" stop-color="#D8D8D8"/><stop offset="1" stop-color="#E2E2E2"/></linearGradient>
<linearGradient id="gWhiteBlue" x1="0" y1="0" x2="0" y2="1"><stop offset="0" stop-color="#FFFFFF"/><stop offset="1" stop-color="#E4F0FA"/></linearGradient>
<linearGradient id="gPeach" x1="0" y1="0" x2="0" y2="1"><stop offset="0" stop-color="#FACFAE"/><stop offset="1" stop-color="#F6BE97"/></linearGradient>
<linearGradient id="gYel" x1="0" y1="0" x2="0" y2="1"><stop offset="0" stop-color="#FFE89A"/><stop offset="1" stop-color="#FFD65C"/></linearGradient>
</defs><use href="#aR" transform="translate(268.20 149.00)" fill="#000000" stroke="#000" stroke-width="0.35" stroke-linejoin="round" opacity="1"/><use href="#aR" transform="translate(319.50 149.00)" fill="#4472C4" stroke="#4472C4" stroke-width="0.3" stroke-linejoin="round" opacity="1"/><use href="#aB" transform="translate(369.80 148.00)" fill="url(#gPeach)" stroke="#EBA57C" stroke-width="0.9" stroke-linejoin="round" opacity="1"/><use href="#aB" transform="translate(421.70 148.70)" fill="#C9D3DE" stroke="none" stroke-width="0" stroke-linejoin="round" opacity="1"/><use href="#aB" transform="translate(421.10 148.00)" fill="url(#gWhiteBlue)" stroke="#8497AE" stroke-width="0.9" stroke-linejoin="round" opacity="1"/><use href="#aB" transform="translate(472.90 148.50)" fill="#C08A00" stroke="none" stroke-width="0" stroke-linejoin="round" opacity="1"/><use href="#aB" transform="translate(472.40 148.00)" fill="url(#gGold)" stroke="#E2A800" stroke-width="0.5" stroke-linejoin="round" opacity="1"/><use href="#aR" transform="translate(268.20 198.80)" fill="url(#gGray)" stroke="none" stroke-width="0" stroke-linejoin="round" opacity="1"/><g transform="translate(0 225.8) scale(1 -1) translate(0 -224.8)"><use href="#aR" transform="translate(319.50 198.80)" fill="url(#gBlueR)" stroke="none" stroke-width="0" stroke-linejoin="round" opacity="1"/></g><use href="#aR" transform="translate(319.50 198.80)" fill="url(#gBlue)" stroke="none" stroke-width="0" stroke-linejoin="round" opacity="1"/><use href="#aB" transform="translate(369.80 197.80)" fill="url(#gYel)" stroke="#F0B400" stroke-width="0.9" stroke-linejoin="round" opacity="1"/><use href="#aB" transform="translate(421.10 197.80)" fill="#FFFFFF" stroke="#4A70C0" stroke-width="1.0" stroke-linejoin="round" opacity="1"/><use href="#aB" transform="translate(473.20 198.40)" fill="#B8B8B8" stroke="none" stroke-width="0" stroke-linejoin="round" opacity="1"/><use href="#aB" transform="translate(472.40 197.80)" fill="url(#gDk)" stroke="none" stroke-width="0" stroke-linejoin="round" opacity="1"/><use href="#aB" transform="translate(269.00 251.60)" fill="#9C9C9C" stroke="#9C9C9C" stroke-width="0.5" stroke-linejoin="round" opacity="1"/><use href="#aB" transform="translate(268.10 250.80)" fill="#FFFFFF" stroke="none" stroke-width="0" stroke-linejoin="round" opacity="1"/><use href="#aB" transform="translate(267.20 250.00)" fill="#0A0A0A" stroke="none" stroke-width="0" stroke-linejoin="round" opacity="1"/><use href="#aB" transform="translate(320.10 251.50)" fill="#6FA6DA" stroke="none" stroke-width="0" stroke-linejoin="round" opacity="1"/><use href="#aB" transform="translate(319.30 250.70)" fill="#FFFFFF" stroke="none" stroke-width="0" stroke-linejoin="round" opacity="1"/><use href="#aB" transform="translate(318.50 250.00)" fill="#262626" stroke="none" stroke-width="0" stroke-linejoin="round" opacity="1"/><use href="#aB" transform="translate(371.40 251.50)" fill="#BCD6EE" stroke="none" stroke-width="0" stroke-linejoin="round" opacity="1"/><use href="#aB" transform="translate(370.60 250.70)" fill="#FFFFFF" stroke="none" stroke-width="0" stroke-linejoin="round" opacity="1"/><use href="#aB" transform="translate(369.80 250.00)" fill="#5B9BD5" stroke="none" stroke-width="0" stroke-linejoin="round" opacity="1"/><use href="#aB" transform="translate(422.10 251.00)" fill="#D9691F" stroke="#D9691F" stroke-width="0.6" stroke-linejoin="round" opacity="1"/><use href="#aB" transform="translate(421.10 250.00)" fill="#FFFFFF" stroke="#EE8A4A" stroke-width="0.9" stroke-linejoin="round" opacity="1"/><use href="#aR" transform="translate(474.20 251.60)" fill="#C8C8C8" stroke="none" stroke-width="0" stroke-linejoin="round" opacity="1"/><use href="#aR" transform="translate(473.40 251.00)" fill="url(#gLt)" stroke="#D0D0D0" stroke-width="0.5" stroke-linejoin="round" opacity="1"/></svg>
<svg class="a" style="left:265px;top:301px;" width="17" height="18" viewBox="0 0 17 18"><path d="M0 27 L9.8 0 L15.2 0 L25 27 L20.6 27 L18.6 21.6 L6.4 21.6 L4.4 27 Z M7.9 17.6 L17.1 17.6 L12.5 5.0 Z" fill-rule="evenodd" transform="translate(3.2 1.8) scale(0.4)" fill="#fff" stroke="#505050" stroke-width="2.3" stroke-linejoin="round" /><rect x="1" y="13.5" width="14.8" height="3.2" fill="#111"/></svg>
<svg class="a" style="left:265px;top:329px;" width="17" height="17" viewBox="0 0 17 17"><path d="M0 27 L9.8 0 L15.2 0 L25 27 L20.6 27 L18.6 21.6 L6.4 21.6 L4.4 27 Z M7.9 17.6 L17.1 17.6 L12.5 5.0 Z" fill-rule="evenodd" transform="translate(3.0 3.0) scale(0.47)" fill="#D0D0D0" stroke="#C0C0C0" stroke-width="2.3" stroke-linejoin="round" /><path d="M0 27 L9.8 0 L15.2 0 L25 27 L20.6 27 L18.6 21.6 L6.4 21.6 L4.4 27 Z M7.9 17.6 L17.1 17.6 L12.5 5.0 Z" fill-rule="evenodd" transform="translate(2.2 2.0) scale(0.47)" fill="#fff" stroke="#505050" stroke-width="2.3" stroke-linejoin="round" /></svg>
<svg class="a" style="left:265px;top:354px;" width="17" height="20" viewBox="0 0 17 20"><g opacity="0.6"><path d="M0 27 L9.8 0 L15.2 0 L25 27 L20.6 27 L18.6 21.6 L6.4 21.6 L4.4 27 Z M7.9 17.6 L17.1 17.6 L12.5 5.0 Z" fill-rule="evenodd" transform="translate(2.2 18.8) scale(0.46 -0.16)" fill="#fff" stroke="#8A8A8A" stroke-width="2.3" stroke-linejoin="round" /></g><path d="M0 27 L9.8 0 L15.2 0 L25 27 L20.6 27 L18.6 21.6 L6.4 21.6 L4.4 27 Z M7.9 17.6 L17.1 17.6 L12.5 5.0 Z" fill-rule="evenodd" transform="translate(2.2 1.6) scale(0.47)" fill="#fff" stroke="#505050" stroke-width="2.3" stroke-linejoin="round" /></svg>
<svg class="a" style="left:265px;top:380px;" width="17" height="17" viewBox="0 0 17 17"><path d="M0 27 L9.8 0 L15.2 0 L25 27 L20.6 27 L18.6 21.6 L6.4 21.6 L4.4 27 Z M7.9 17.6 L17.1 17.6 L12.5 5.0 Z" fill-rule="evenodd" transform="translate(2.2 2.5) scale(0.47)" fill="#E0E0E0" stroke="#DDDDDD" stroke-width="4.5" stroke-linejoin="round" /><path d="M0 27 L9.8 0 L15.2 0 L25 27 L20.6 27 L18.6 21.6 L6.4 21.6 L4.4 27 Z M7.9 17.6 L17.1 17.6 L12.5 5.0 Z" fill-rule="evenodd" transform="translate(2.2 2.5) scale(0.47)" fill="#fff" stroke="#505050" stroke-width="2.3" stroke-linejoin="round" /></svg>
<svg class="a" style="left:265px;top:408px;" width="18" height="14" viewBox="0 0 18 14"><text x="1" y="10.8" font-family="Liberation Sans" font-size="8.5" fill="#444">12</text><text x="10.8" y="12.2" font-family="Liberation Sans" font-size="9" fill="#444">3</text></svg>
<svg class="a" style="left:267px;top:434px;" width="12" height="17" viewBox="0 0 12 17"><path d="M3 16 V5 C3 2 4.5 1 7 1.5 M0.5 7h6.5 V16" fill="none" stroke="#555" stroke-width="1.1"/></svg>
<svg class="a" style="left:264px;top:461px;" width="20" height="14" viewBox="0 0 20 14"><text x="0.5" y="11.8" font-family="Liberation Serif" font-style="italic" font-size="12.5" fill="#444">abc</text></svg>
<div class="a" style="left:288.6px;top:316.2px;width:8.3px;height:0.9px;background:#6A6A6A"></div>
<div class="a" style="left:288.6px;top:342.6px;width:7.1px;height:0.9px;background:#6A6A6A"></div>
<div class="a" style="left:288.6px;top:369.1px;width:7.7px;height:0.9px;background:#6A6A6A"></div>
<div class="a" style="left:288.6px;top:395.6px;width:8.3px;height:0.9px;background:#6A6A6A"></div>
<div class="a" style="left:288.6px;top:422.0px;width:7.7px;height:0.9px;background:#6A6A6A"></div>
<div class="a" style="left:288.6px;top:448.4px;width:5.9px;height:0.9px;background:#6A6A6A"></div>
<div class="a" style="left:295.8px;top:474.9px;width:3.0px;height:0.9px;background:#6A6A6A"></div>
<div class="a" style="left:249.2px;top:105.1px;width:44.8px;height:34.5px;border:2px solid #D0302F;box-sizing:border-box"></div>
</body></html>
